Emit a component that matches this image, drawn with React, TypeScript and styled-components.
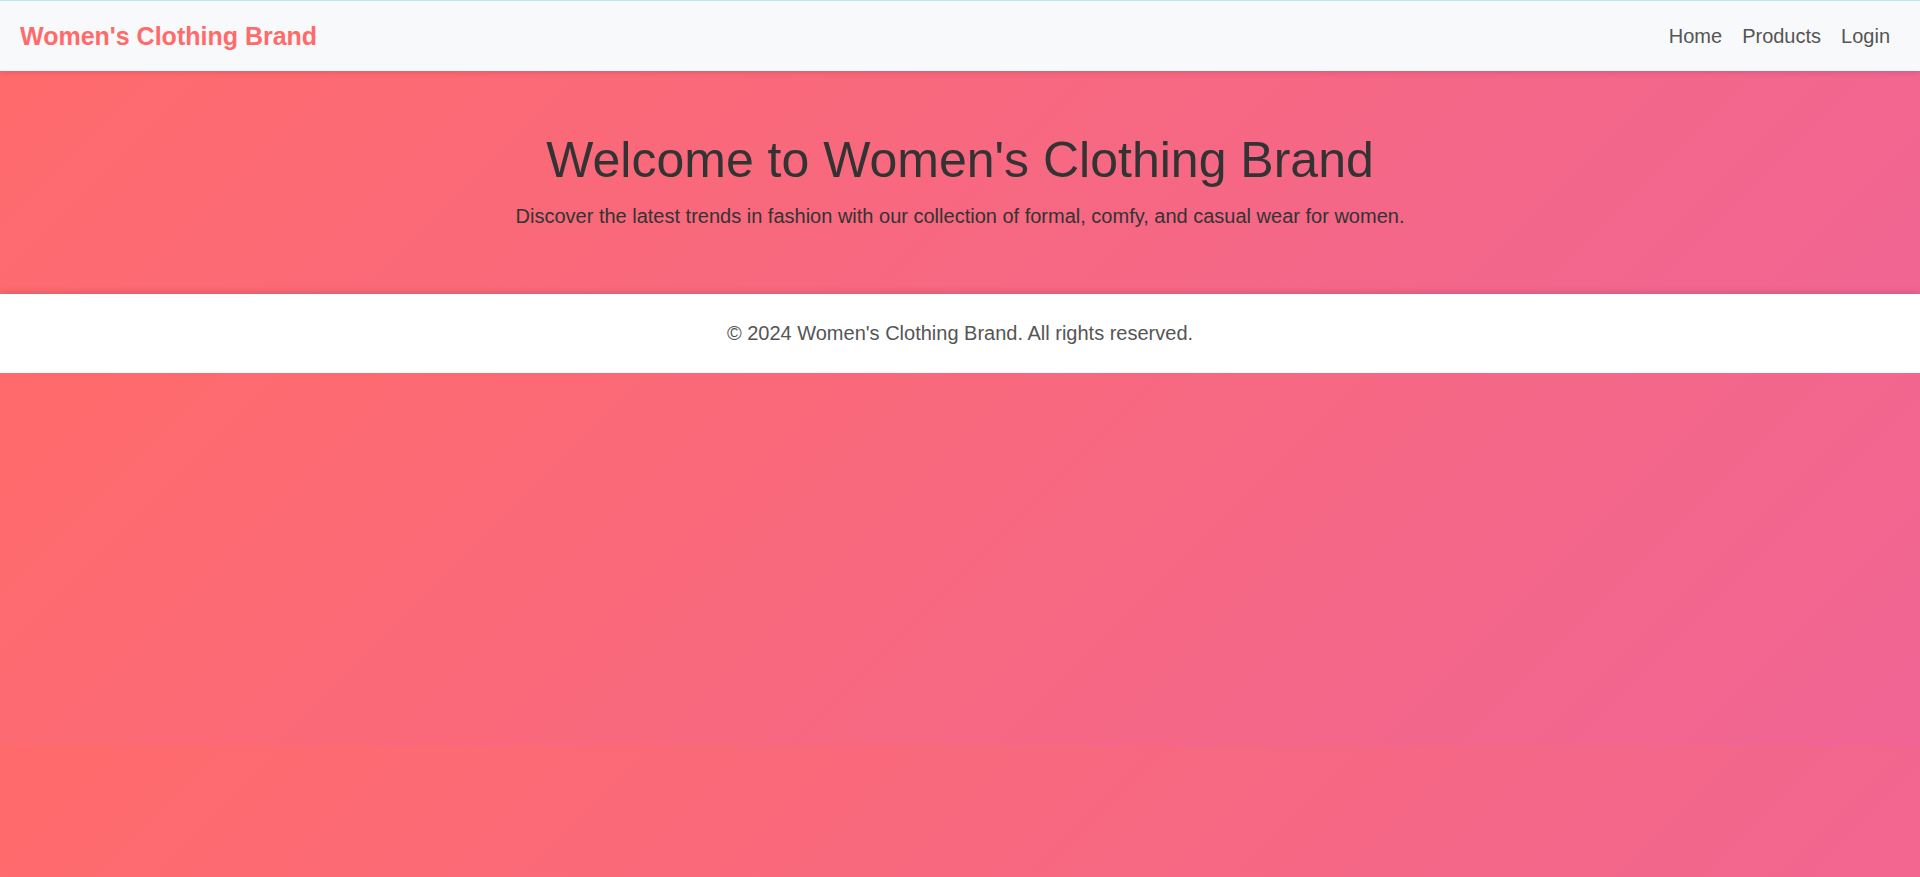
import React from "react";
import styled, { createGlobalStyle } from "styled-components";

const NAV_H = 71;
const HERO_H = 223;
const FOOT_H = 79;
const PAGE_H = NAV_H + HERO_H + FOOT_H;

const GlobalStyle = createGlobalStyle`
  * { box-sizing: border-box; }
  html {
    background: linear-gradient(135deg, #ff6b6b, #f06595);
    background-size: 100% ${PAGE_H}px;
    background-repeat: repeat;
  }
  body {
    margin: 0;
    font-family: "Liberation Sans", Arial, sans-serif;
    font-size: 20px;
    color: #333;
  }
`;

const NavBar = styled.nav`
  display: flex;
  align-items: center;
  justify-content: space-between;
  height: ${NAV_H}px;
  padding: 0 30px 0 20px;
  background: #f8f9fa;
  border-top: 1px solid #b8e4ec;
  box-shadow: 0 2px 5px rgba(0, 0, 0, 0.1);
  position: relative;
  z-index: 2;
`;

const Brand = styled.a`
  font-size: 25px;
  font-weight: bold;
  color: #ff6b6b;
  text-decoration: none;
`;

const NavLinks = styled.ul`
  display: flex;
  gap: 20px;
  list-style: none;
  margin: 0;
  padding: 0;
`;

const NavLink = styled.a`
  font-size: 20px;
  color: #555;
  text-decoration: none;
`;

const Hero = styled.header`
  display: flex;
  flex-direction: column;
  align-items: center;
  text-align: center;
  height: ${HERO_H}px;
  padding: 60px 20px 0;
`;

const Title = styled.h1`
  margin: 0 0 16px;
  font-size: 50px;
  font-weight: normal;
  color: #333;
`;

const Subtitle = styled.p`
  margin: 0;
  font-size: 20px;
  color: #333;
`;

const Footer = styled.footer`
  background: #fff;
  text-align: center;
  padding: 28px 20px;
  height: ${FOOT_H}px;
  color: #555;
  font-size: 20px;
  box-shadow: 0 -2px 6px rgba(0, 0, 0, 0.12);
  position: relative;
`;

export default function App() {
  return (
    <>
      <GlobalStyle />
      <NavBar>
        <Brand href="#">Women's Clothing Brand</Brand>
        <NavLinks>
          <li><NavLink href="#">Home</NavLink></li>
          <li><NavLink href="#">Products</NavLink></li>
          <li><NavLink href="#">Login</NavLink></li>
        </NavLinks>
      </NavBar>
      <Hero>
        <Title>Welcome to Women's Clothing Brand</Title>
        <Subtitle>
          Discover the latest trends in fashion with our collection of formal, comfy, and casual wear for women.
        </Subtitle>
      </Hero>
      <Footer>© 2024 Women's Clothing Brand. All rights reserved.</Footer>
    </>
  );
}
